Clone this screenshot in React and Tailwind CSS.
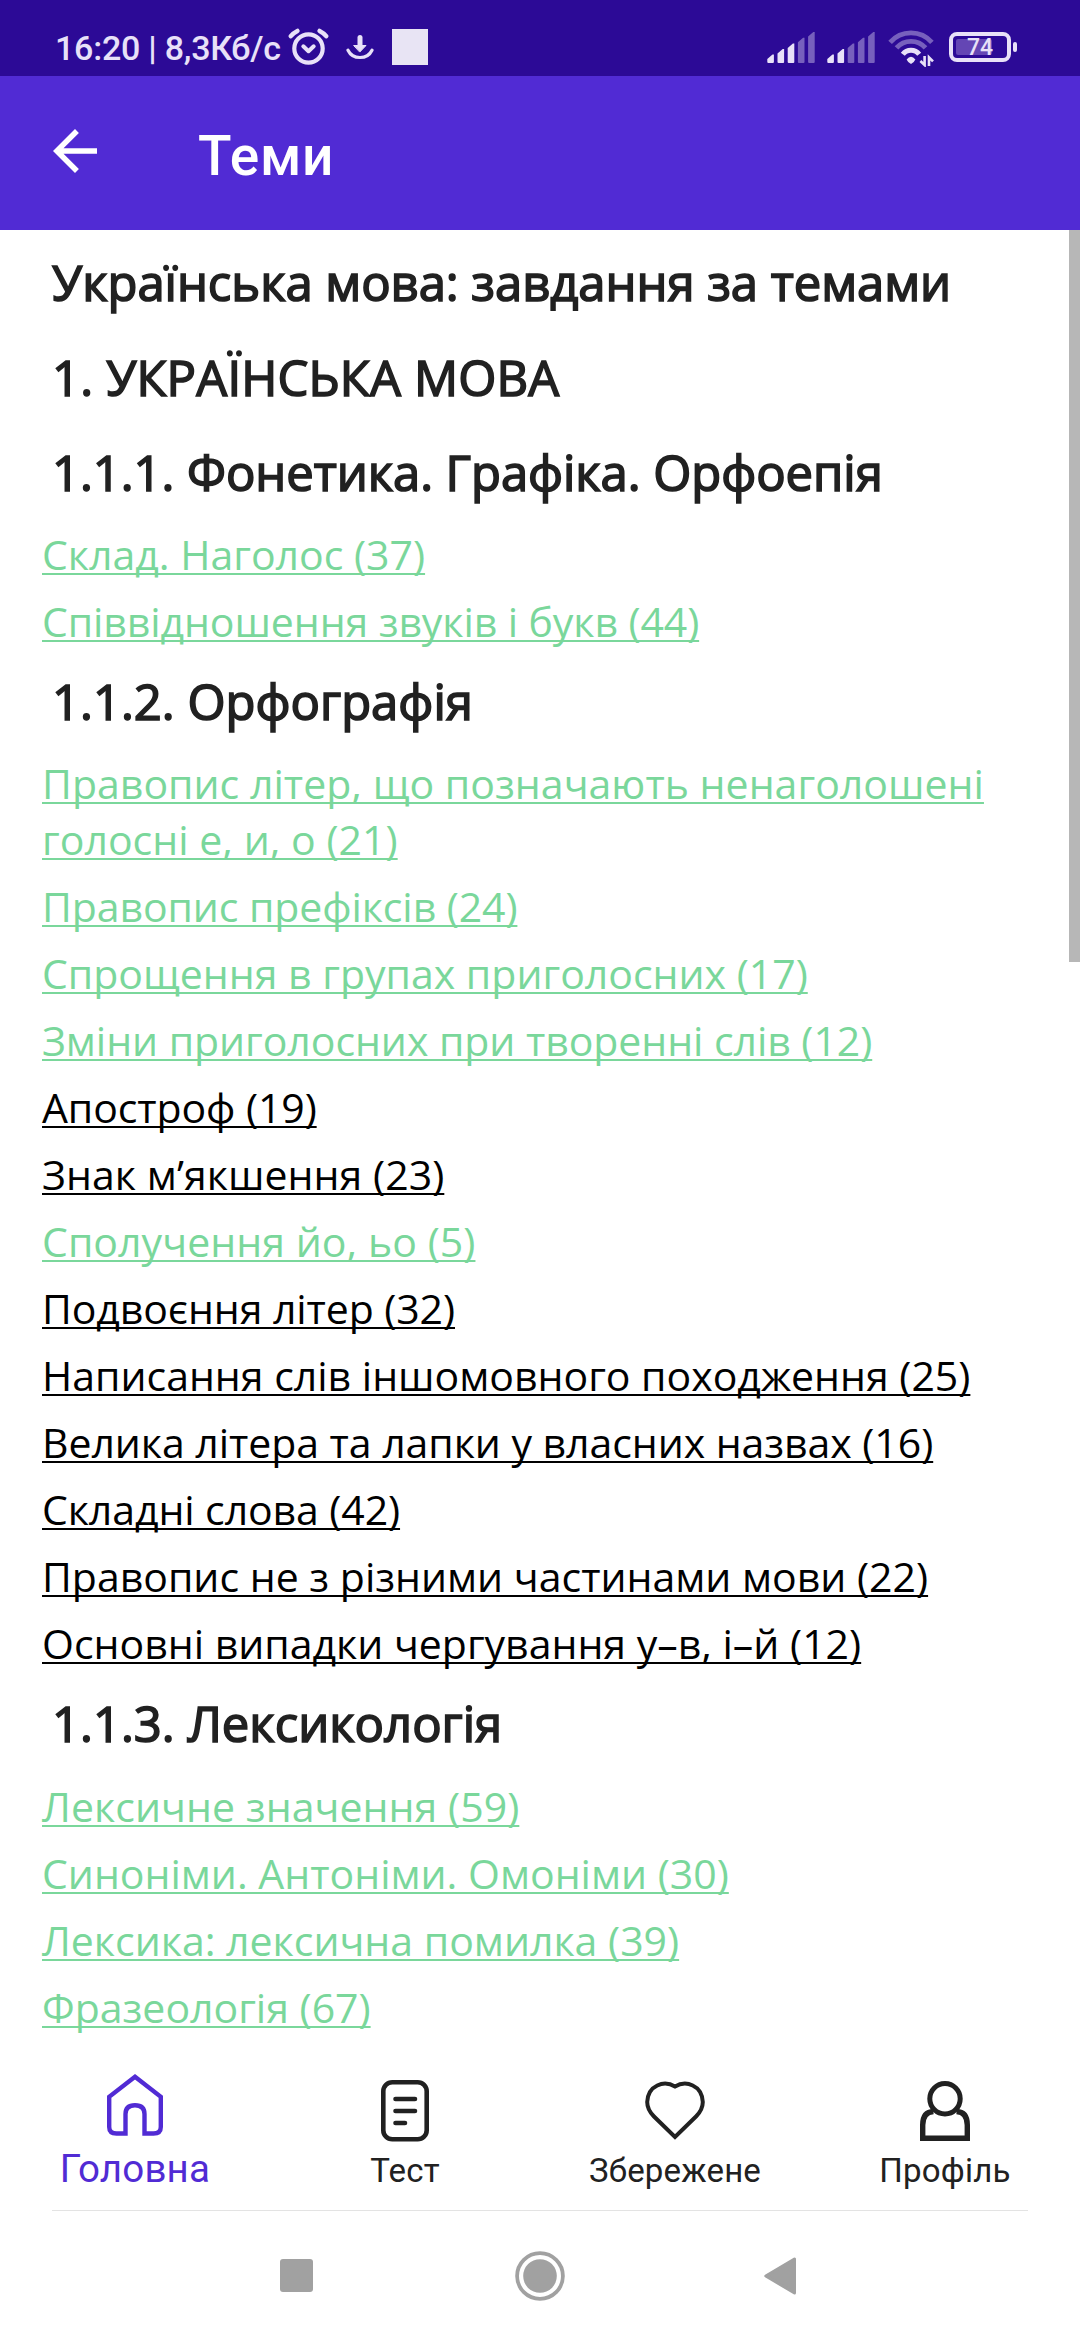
const GREEN = "text-[#7ad79b]";
const BLACK = "text-black";
const TIGHT = "tracking-[-0.085px]";
const SNUG = "tracking-[-0.05px]";
const WIDE = "tracking-[0.06px]";

const sections = [
  { title: "Українська мова: завдання за темами", spacing: "tracking-[-0.05px]", links: [] },
  { title: "1. УКРАЇНСЬКА МОВА", spacing: "tracking-[0.17px]", links: [] },
  {
    title: "1.1.1. Фонетика. Графіка. Орфоепія",
    spacing: "tracking-[-0.07px]",
    links: [
      [GREEN, "Склад. Наголос (37)"],
      [GREEN, "Співвідношення звуків і букв (44)", TIGHT],
    ],
  },
  {
    title: "1.1.2. Орфографія",
    links: [
      [GREEN, "Правопис літер, що позначають ненаголошені голосні е, и, о (21)", "tracking-[0.03px]"],
      [GREEN, "Правопис префіксів (24)", TIGHT],
      [GREEN, "Спрощення в групах приголосних (17)"],
      [GREEN, "Зміни приголосних при творенні слів (12)", SNUG],
      [BLACK, "Апостроф (19)", TIGHT],
      [BLACK, "Знак м’якшення (23)", WIDE],
      [GREEN, "Сполучення йо, ьо (5)", WIDE],
      [BLACK, "Подвоєння літер (32)", TIGHT],
      [BLACK, "Написання слів іншомовного походження (25)"],
      [BLACK, "Велика літера та лапки у власних назвах (16)", SNUG],
      [BLACK, "Складні слова (42)", TIGHT],
      [BLACK, "Правопис не з різними частинами мови (22)"],
      [BLACK, "Основні випадки чергування у–в, і–й (12)"],
    ],
  },
  {
    title: "1.1.3. Лексикологія",
    links: [
      [GREEN, "Лексичне значення (59)", WIDE],
      [GREEN, "Синоніми. Антоніми. Омоніми (30)"],
      [GREEN, "Лексика: лексична помилка (39)"],
      [GREEN, "Фразеологія (67)"],
    ],
  },
];

function Signal({ level }) {
  const tops = [22.5, 17, 11.5, 5.7, 0];
  return (
    <svg className="h-[31px] w-[48px]" viewBox="0 0 48 31" fill="#e8e1f8">
      {tops.map((t, i) => (
        <path
          key={i}
          opacity={i < level ? 1 : 0.4}
          d={`M${i * 10.2 + 0.3} ${t + 4.5} L${i * 10.2 + 5.5} ${t} h1.4 V30 q0 1 -1 1 h-4.6 q-1 0 -1 -1 Z`}
        />
      ))}
    </svg>
  );
}

function StatusBar() {
  return (
    <div className="flex h-[76px] items-start bg-[#2c0a96] pl-[55px] pr-[63px] text-[#e8e1f8]">
      <div className="mt-[28px] w-[229px] whitespace-nowrap text-[34px] leading-[40px] font-medium tracking-[-0.23px]">
        16:20 | 8,3Кб/с
      </div>
      <svg className="ml-[4px] mt-[28px] h-[38px] w-[41px]" viewBox="0 0 41 38" fill="none" stroke="#e8e1f8">
        <circle cx="20.5" cy="20.5" r="14.2" strokeWidth="4.2" />
        <path d="M15.3 18.3 L20.5 23.2 L25.7 18.3" strokeWidth="4" strokeLinecap="round" strokeLinejoin="round" />
        <path d="M2.8 8.2 Q5.5 4.8 9.4 2.9 M38.2 8.2 Q35.5 4.8 31.6 2.9" strokeWidth="4.4" strokeLinecap="round" />
      </svg>
      <svg className="ml-[17px] mt-[34px] h-[26px] w-[28px]" viewBox="0 0 28 26" fill="none" stroke="#e8e1f8" strokeLinecap="round">
        <path d="M14 3.5 V12" strokeWidth="5" />
        <path d="M8 11.5 H20 L14 17.8 Z" fill="#e8e1f8" strokeWidth="1" strokeLinejoin="round" />
        <path d="M2 16.2 Q5.5 23.5 14 23.5 Q22.5 23.5 26 16.2" strokeWidth="3.2" />
      </svg>
      <div className="ml-[18px] mt-[29px] h-[36px] w-[36px] bg-[#e8e4f4]" />
      <div className="ml-auto mt-[32px]">
        <Signal level={3} />
      </div>
      <div className="ml-[12px] mt-[32px]">
        <Signal level={2} />
      </div>
      <svg className="ml-[12px] mt-[30px] h-[37px] w-[48px]" viewBox="0 0 48 37" fill="none" stroke="#e8e1f8">
        <path d="M3.1 12.3 A27.7 27.7 0 0 1 44.9 12.3" opacity="0.4" strokeWidth="4.8" />
        <path d="M9.5 17.9 A19.2 19.2 0 0 1 38.5 17.9" opacity="0.4" strokeWidth="4.8" />
        <path d="M15.8 24.3 A10.4 10.4 0 0 1 32.2 24.3" strokeWidth="5" />
        <path d="M19.6 29.5 Q24 24 28.4 29.5 Q26.8 33 24 34 Q21.2 33 19.6 29.5 Z" fill="#e8e1f8" stroke="none" />
        <path d="M37.6 26 V35 L33.4 31 M42 36 V27.4 L46 31.4" strokeWidth="2.6" />
      </svg>
      <div className="ml-[14px] mt-[32px] flex items-center">
        <div className="relative flex h-[30px] w-[62px] items-center justify-center rounded-[8px] border-4 border-current">
          <div className="absolute left-[3px] top-[3px] h-[16px] w-[36px] rounded-[2px] bg-[#6446b4]" />
          <span className="relative text-[23px] leading-none font-medium">74</span>
        </div>
        <div className="ml-[2px] h-[10px] w-[4px] rounded-[2px] bg-current" />
      </div>
    </div>
  );
}

function Tab({ label, active, children }) {
  return (
    <div className={active ? "flex w-[270px] flex-col items-center text-[#512bd4]" : "flex w-[270px] flex-col items-center text-[#212121]"}>
      <svg className="h-[76px] w-[66px]" viewBox="0 0 66 76" fill="none" stroke="currentColor">
        {children}
      </svg>
      <span
        className={
          active
            ? "mt-[2px] text-[38.5px] leading-[46px] tracking-[0.2px]"
            : "mt-[7px] text-[33px] leading-[40px] tracking-[0.2px]"
        }
      >
        {label}
      </span>
    </div>
  );
}

export default function App() {
  return (
    <div className="flex h-[2340px] w-[1080px] flex-col overflow-hidden bg-white font-['Roboto',sans-serif]">
      <StatusBar />
      <header className="flex h-[154px] items-start bg-[#512bd4] text-white">
        <svg className="ml-[42px] mt-[42px] h-[66px] w-[66px]" viewBox="0 0 24 24" fill="currentColor">
          <path d="M20 11H7.83l5.59-5.59L12 4l-8 8 8 8 1.41-1.41L7.83 13H20v-2z" />
        </svg>
        <h1 className="ml-[90px] mt-[48px] text-[55px] leading-[64px] font-medium tracking-[0.8px]">Теми</h1>
      </header>

      <div className="flex h-[1822px] shrink-0 overflow-hidden">
        <main className="w-[1069px] pt-[5px] font-['Open_Sans','Noto_Sans',sans-serif]">
          {sections.map((s) => (
            <section key={s.title}>
              <h2
                className={`${s.spacing ?? "tracking-normal"} py-[14px] pl-[52px] text-[49px] leading-[67px] text-[#212121] [-webkit-text-stroke:1.6px_#212121]`}
              >
                {s.title}
              </h2>
              {s.links.map(([tone, text, spacing]) => (
                <div key={text} className="pt-[6.04px] pb-[5px] pl-[42px] pr-[42px] text-[41px] leading-[56px]">
                  <a
                    className={`${tone} ${spacing ?? "tracking-normal"} underline decoration-2 underline-offset-[3px] [text-decoration-skip-ink:none]`}
                  >
                    {text}
                  </a>
                </div>
              ))}
            </section>
          ))}
        </main>
        <div className="h-[732px] w-[11px] bg-[#b7b7b7]" />
      </div>

      <nav className="flex h-[158px] shrink-0 pt-[16px]">
        <Tab label="Головна" active>
          <path strokeWidth="4.4" d="M33 8.8 L58.8 28.8 V59 Q58.8 65.5 51.5 65.5 H42.5 V46 Q42.5 37.3 33 37.3 Q23.5 37.3 23.5 46 V65.5 H14.5 Q7.2 65.5 7.2 59 V28.8 Z" />
        </Tab>
        <Tab label="Тест">
          <rect x="11.3" y="14.3" width="43.4" height="57" rx="9" strokeWidth="4.6" />
          <path strokeWidth="4.6" strokeLinecap="round" d="M23.5 31 H43 M23.5 43 H43 M23.5 55 H33" />
        </Tab>
        <Tab label="Збережене">
          <path strokeWidth="4" d="M33 18.5 C22 12 6 17 5.2 34 C5.2 41 9 45.5 12 48.5 L33 69 L54 48.5 C57 45.5 60.8 41 60.8 34 C60 17 44 12 33 18.5 Z" />
        </Tab>
        <Tab label="Профіль">
          <circle cx="33" cy="30.7" r="15.2" strokeWidth="5" />
          <path strokeWidth="5.4" d="M21.5 43.5 Q10.7 44 10.7 57 V70.3 H55.3 V57 Q55.3 44 44.5 43.5" />
        </Tab>
      </nav>
      <div className="mx-[52px] h-px shrink-0 bg-[#e3e3e3]" />
      <div className="flex flex-1 items-start">
        <div className="ml-[280px] mt-[48px] h-[33px] w-[33px] rounded-[3px] bg-[#a1a1a1]" />
        <svg className="ml-[202px] mt-[40px] h-[50px] w-[50px]" viewBox="0 0 50 50">
          <circle cx="25" cy="25" r="22.9" fill="none" stroke="#a1a1a1" strokeWidth="3.8" />
          <circle cx="25" cy="25" r="16.8" fill="#a1a1a1" />
        </svg>
        <svg className="ml-[199px] mt-[46px] h-[38px] w-[33px]" viewBox="0 0 33 38">
          <path d="M1.8 19 L30.5 2 V36 Z" fill="#a1a1a1" stroke="#a1a1a1" strokeWidth="3" strokeLinejoin="round" />
        </svg>
      </div>
    </div>
  );
}
